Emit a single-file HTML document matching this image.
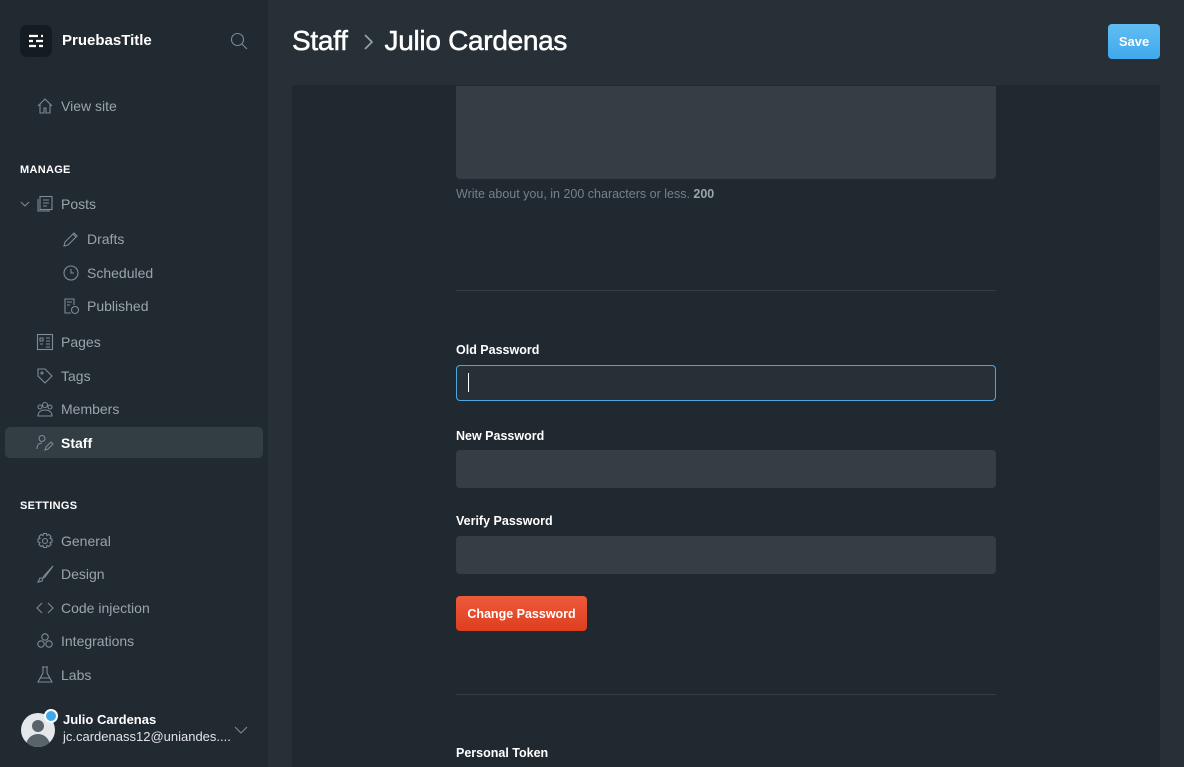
<!DOCTYPE html>
<html><head><meta charset="utf-8"><style>
*{box-sizing:border-box;margin:0;padding:0}
body{width:1184px;height:767px;overflow:hidden;background:#263036;font-family:"Liberation Sans",sans-serif;position:relative}
.sb{position:absolute;left:0;top:0;width:268px;height:767px;background:#222a31}
.logo{position:absolute;left:20px;top:25px;width:32px;height:32px;border-radius:7px;background:#151c21}
.brand{position:absolute;left:62px;top:32px;color:#fff;font-weight:bold;font-size:15px}
.it{position:absolute;left:61px;color:#9aa4ab;font-size:14px}
.ic{position:absolute;width:18px;height:18px}
.sec{position:absolute;left:20px;color:#fff;font-weight:bold;font-size:11px;letter-spacing:.3px}
.act{position:absolute;left:5px;top:427px;width:258px;height:31px;background:#333d44;border-radius:5px}
.main{position:absolute;left:292px;top:85px;width:868px;height:682px;background:#212930}
h1{position:absolute;left:292px;top:25px;color:#fff;font-size:28px;font-weight:normal;letter-spacing:-.3px;-webkit-text-stroke:.5px #fff}
.save{position:absolute;left:1108px;top:24px;width:52px;height:35px;border-radius:4px;background:linear-gradient(#62bdf2,#3ea9ec);color:#fff;font-weight:bold;font-size:13px;text-align:center;line-height:35px}
.ta{position:absolute;left:456px;top:86px;width:540px;height:93px;background:#343e44;border-radius:0 0 4px 4px}
.lbl{position:absolute;left:456px;color:#fff;font-weight:bold;font-size:12.5px}
.inp{position:absolute;left:456px;width:540px;height:38px;background:#343e44;border-radius:4px}
.hr{position:absolute;left:456px;width:540px;height:1px;background:#343e44}
svg{stroke:#7f8a92;fill:none;stroke-width:1.1}
</style></head><body>
<div class="sb">
<div class="logo"><svg width="32" height="32" viewBox="0 0 32 32" style="stroke:#fff;stroke-width:2.2"><path d="M9 11h9M21 11h2M9 16h4M16 16h7M9 21h7M19 21h4"/></svg></div>
<div class="brand">PruebasTitle</div>
<svg style="position:absolute;left:230px;top:32px" width="18" height="18" viewBox="0 0 18 18"><circle cx="7.5" cy="7.5" r="6"/><path d="M12 12l5 5"/></svg>
<svg class="ic" style="left:36px;top:97px" viewBox="0 0 18 18"><path d="M2 9L9 2l7 7M4 7v9h4v-5h2v5h4V7"/></svg>
<div class="it" style="top:98px">View site</div>
<div class="sec" style="top:164px">MANAGE</div>
<svg style="position:absolute;left:20px;top:199px" width="10" height="10" viewBox="0 0 10 10"><path d="M1 3l4 4 4-4"/></svg>
<svg class="ic" style="left:36px;top:195px" viewBox="0 0 18 18"><rect x="4" y="1.5" width="12" height="13"/><path d="M2 4v12h12M7 5h6M7 8h6M7 11h4"/></svg>
<div class="it" style="top:196px">Posts</div>
<svg class="ic" style="left:62px;top:230px" viewBox="0 0 18 18"><path d="M2 16l1-4 9-9 3 3-9 9zM11 4l3 3"/></svg>
<div class="it" style="left:87px;top:231px">Drafts</div>
<svg class="ic" style="left:62px;top:264px" viewBox="0 0 18 18"><circle cx="9" cy="9" r="7"/><path d="M9 5v4h3"/></svg>
<div class="it" style="left:87px;top:265px">Scheduled</div>
<svg class="ic" style="left:62px;top:297px" viewBox="0 0 18 18"><path d="M9 16H3V2h9v6M5 5h5M5 8h3"/><circle cx="13" cy="13" r="3.5"/></svg>
<div class="it" style="left:87px;top:298px">Published</div>
<svg class="ic" style="left:36px;top:333px" viewBox="0 0 18 18"><rect x="1.5" y="1.5" width="15" height="15"/><path d="M4 5h3v3H4zM4 11h3M10 5h4M10 8h4M10 11h4M10 14h4"/></svg>
<div class="it" style="top:334px">Pages</div>
<svg class="ic" style="left:36px;top:367px" viewBox="0 0 18 18"><path d="M2 2h7l7 7-7 7-7-7z"/><circle cx="6" cy="6" r="1"/></svg>
<div class="it" style="top:368px">Tags</div>
<svg class="ic" style="left:36px;top:400px" viewBox="0 0 18 18"><circle cx="9" cy="5" r="2.5"/><circle cx="4" cy="7" r="2"/><circle cx="14" cy="7" r="2"/><path d="M2 16c0-4 3-6 7-6s7 2 7 6z"/></svg>
<div class="it" style="top:401px">Members</div>
<div class="act"></div>
<svg class="ic" style="left:36px;top:434px" viewBox="0 0 18 18" ><circle cx="6" cy="4.5" r="3"/><path d="M1 15c0-4 2-6 5-6M9 16l1-3 5-5 2 2-5 5z"/></svg>
<div class="it" style="top:435px;color:#fff;font-weight:bold">Staff</div>
<div class="sec" style="top:500px">SETTINGS</div>
<svg class="ic" style="left:36px;top:532px" viewBox="0 0 18 18"><circle cx="9" cy="9" r="2.5"/><path d="M7.5 1.5h3l.5 2 2-1 2 2-1 2 2 .5v3l-2 .5 1 2-2 2-2-1-.5 2h-3l-.5-2-2 1-2-2 1-2-2-.5v-3l2-.5-1-2 2-2 2 1z"/></svg>
<div class="it" style="top:533px">General</div>
<svg class="ic" style="left:36px;top:565px" viewBox="0 0 18 18"><path d="M17 1L8 11l-1 2-3 0-2 4 4-1 1-3 2-1z"/></svg>
<div class="it" style="top:566px">Design</div>
<svg class="ic" style="left:36px;top:599px" viewBox="0 0 18 18"><path d="M6 4L1 9l5 5M12 4l5 5-5 5"/></svg>
<div class="it" style="top:600px">Code injection</div>
<svg class="ic" style="left:36px;top:632px" viewBox="0 0 18 18"><circle cx="9" cy="5" r="3.2"/><circle cx="5" cy="12" r="3.2"/><circle cx="13" cy="12" r="3.2"/></svg>
<div class="it" style="top:633px">Integrations</div>
<svg class="ic" style="left:36px;top:666px" viewBox="0 0 18 18"><path d="M6 1h6M7 1v6L2 16h14L11 7V1M4 12h10"/></svg>
<div class="it" style="top:667px">Labs</div>
<div style="position:absolute;left:21px;top:713px;width:34px;height:34px;border-radius:50%;background:#e5e8ea;overflow:hidden"><div style="position:absolute;left:11px;top:7px;width:12px;height:12px;border-radius:50%;background:#58636a"></div><div style="position:absolute;left:5px;top:21px;width:24px;height:18px;border-radius:12px 12px 0 0;background:#58636a"></div></div>
<div style="position:absolute;left:44px;top:709px;width:14px;height:14px;border-radius:50%;background:#3ea9ec;border:2px solid #fff"></div>
<div style="position:absolute;left:63px;top:712px;color:#fff;font-weight:bold;font-size:13px">Julio Cardenas</div>
<div style="position:absolute;left:63px;top:729px;color:#dfe3e6;font-size:13px">jc.cardenass12@uniandes....</div>
<svg style="position:absolute;left:234px;top:725px" width="14" height="10" viewBox="0 0 14 10"><path d="M1 2l6 6 6-6"/></svg>
</div>
<h1>Staff <span style="display:inline-block;width:22px"></span> Julio Cardenas</h1>
<svg style="position:absolute;left:362px;top:33px" width="14" height="18" viewBox="0 0 14 18"><path d="M3 2l7 7-7 7" stroke="#9aa4ab" stroke-width="1.6"/></svg>
<div class="save">Save</div>
<div class="main"></div>
<div class="ta"></div>
<div style="position:absolute;left:456px;top:187px;color:#75808a;font-size:12.5px">Write about you, in 200 characters or less. <b style="color:#9aa4ab">200</b></div>
<div class="hr" style="top:290px"></div>
<div class="lbl" style="top:343px">Old Password</div>
<div class="inp" style="top:365px;height:36px;background:#263036;border:1.5px solid #4aa8e0"><div style="position:absolute;left:11px;top:7px;width:1px;height:19px;background:#fff"></div></div>
<div class="lbl" style="top:429px">New Password</div>
<div class="inp" style="top:450px"></div>
<div class="lbl" style="top:514px">Verify Password</div>
<div class="inp" style="top:536px"></div>
<div style="position:absolute;left:456px;top:596px;width:131px;height:35px;border-radius:4px;background:linear-gradient(#ee5a3c,#dd3e1e);color:#fff;font-weight:bold;font-size:12.5px;text-align:center;line-height:36px">Change Password</div>
<div class="hr" style="top:694px"></div>
<div class="lbl" style="top:746px">Personal Token</div>
</body></html>
